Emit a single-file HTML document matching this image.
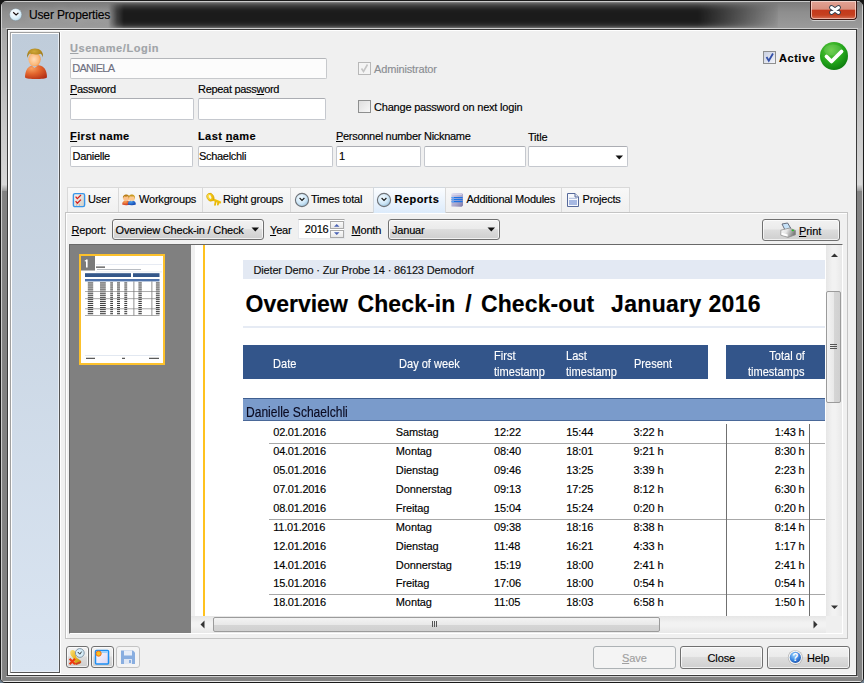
<!DOCTYPE html>
<html><head><meta charset="utf-8">
<style>
*{box-sizing:border-box;margin:0;padding:0}
html,body{width:864px;height:683px;overflow:hidden;background:linear-gradient(#151515 0,#151515 50%,#6f8090 50%)}
body{font-family:"Liberation Sans",sans-serif;font-size:11px;color:#000;position:relative}
.a{position:absolute}
.t{position:absolute;white-space:pre;line-height:1}
.inp{position:absolute;background:#fff;border:1px solid #c5c8ce;border-top-color:#abadb3;border-radius:2px}
.u{text-decoration:underline;text-underline-offset:1px}
.cb{position:absolute;width:13px;height:13px;border:1px solid #8e8f8f;background:linear-gradient(135deg,#dedede,#f8f8f8)}
.tab{position:absolute;top:187px;height:25px;border:1px solid #d9d9d9;border-bottom:none;background:linear-gradient(#f8f8f8,#f0f0f0)}
.btn{position:absolute;border:1px solid #707070;border-radius:3px;background:linear-gradient(#f2f2f2 0,#ebebeb 45%,#dddddd 50%,#cfcfcf 100%);box-shadow:inset 0 0 0 1px rgba(255,255,255,.7)}
.rt{position:absolute;white-space:pre;line-height:1;font-size:11px;color:#000;letter-spacing:-0.2px}
.hd{position:absolute;white-space:pre;line-height:1;font-size:12px;color:#fff}
.t,.rt{-webkit-text-stroke:0.15px currentColor}</style></head><body>
<!-- window frame -->
<div class="a" style="left:0;top:0;width:864px;height:683px;border-radius:7px 7px 5px 5px;background:linear-gradient(90deg,#8a8a8a,#818181 3px,#838383 861px,#8a8a8a);border:1px solid #1a1a1a;overflow:hidden">
  <div class="a" style="left:0;top:0;width:862px;height:28px;background:linear-gradient(#7a7a7a,#8e8e8e 40%,#9c9c9c)"></div>
  <div class="a" style="left:107px;top:2px;width:670px;height:25px;background:linear-gradient(#5a5a5a 0,#3a3a3a 12%,#1c1c1c 28%,#1a1a1a 72%,#2c2c2c 88%,#555 100%);-webkit-mask-image:linear-gradient(90deg,transparent 0,rgba(0,0,0,.7) 9px,#000 16px,#000 590px,rgba(0,0,0,.55) 630px,transparent 675px);filter:blur(1.5px)"></div>

  <div class="a" style="left:0;top:0;width:862px;height:1px;background:#e0e0e0;opacity:.8"></div>
  <div class="a" style="left:1px;top:27px;width:5px;height:163px;background:linear-gradient(#a6a6a6,#c4c4c4 50%,#d8d8d8 96%,#9a9a9a)"></div>
  <div class="a" style="left:856px;top:27px;width:5px;height:163px;background:linear-gradient(#a6a6a6,#c4c4c4 50%,#d8d8d8 96%,#9a9a9a)"></div>
  <div class="a" style="left:0;top:0;width:1px;height:683px;background:#e0e0e0;opacity:.8"></div>
  <div class="a" style="right:0;top:0;width:1px;height:683px;background:#e0e0e0;opacity:.8"></div>
  <div class="a" style="left:0;bottom:0;width:862px;height:1px;background:#e8e8e8"></div>
</div>
<!-- title -->
<svg class="a" style="left:9px;top:8px" width="14" height="14" viewBox="0 0 14 14"><defs><radialGradient id="tc" cx="0.4" cy="0.35" r="0.7"><stop offset="0" stop-color="#fbfdff"/><stop offset="0.6" stop-color="#e0f2fb"/><stop offset="1" stop-color="#b9dcee"/></radialGradient></defs><circle cx="6.7" cy="6.6" r="6.1" fill="url(#tc)" stroke="rgba(110,120,130,.45)" stroke-width="0.8"/><path d="M4.2 4.3 L7.1 6.9 L9.4 4.9" stroke="#1a1010" stroke-width="1.2" fill="none"/></svg>

<div class="t" style="left:29px;top:9px;font-size:12px;color:#000;letter-spacing:-0.15px;text-shadow:0 0 8px rgba(255,255,255,.5)">User Properties</div>
<!-- close button -->
<div class="a" style="left:810px;top:1px;width:47px;height:19px;border:1px solid #3c1612;border-top:none;border-radius:0 0 4px 4px;background:linear-gradient(#e2a294 0,#d8907f 45%,#c4391c 52%,#c5401f 78%,#d47058 100%);box-shadow:inset 1px 0 0 rgba(255,225,215,.7),inset -1px 0 0 rgba(255,225,215,.7),inset 0 -1px 0 rgba(255,225,215,.6),0 1px 0 rgba(255,255,255,.55)"></div>
<div class="a" style="left:810px;top:0;width:47px;height:1px;background:#1a1a1a"></div>
<div class="a" style="left:811px;top:1px;width:45px;height:1px;background:#f0d0c8"></div>
<svg class="a" style="left:824px;top:3px" width="22" height="14"><path d="M7.5 4.5 L14.5 9.5 M14.5 4.5 L7.5 9.5" stroke="#33404f" stroke-width="4.8" stroke-linecap="round"/><path d="M7.5 4.5 L14.5 9.5 M14.5 4.5 L7.5 9.5" stroke="#fff" stroke-width="3" stroke-linecap="round"/></svg>
<!-- client -->
<div class="a" style="left:7px;top:29px;width:850px;height:647px;background:#f0f0f0;border:1px solid #3a3a3a"></div>
<div class="a" style="left:8px;top:30px;width:848px;height:1px;background:#fff"></div>
<div class="a" style="left:8px;top:30px;width:1px;height:645px;background:#fff"></div>
<div class="a" style="left:8px;top:674px;width:848px;height:1px;background:#fff"></div>
<div class="a" style="left:6px;top:28px;width:852px;height:1px;background:#d0d0d0"></div>
<div class="a" style="left:6px;top:676px;width:852px;height:1px;background:#cfcfcf"></div>
<!-- left panel -->
<div class="a" style="left:10px;top:32px;width:50px;height:641px;border-top:1px solid #a0a0a0;border-left:1px solid #a0a0a0;border-right:1px solid #555;border-bottom:1px solid #555;background:linear-gradient(#bfccda,#dae5f2);box-shadow:inset 1px 1px 0 #fff,inset -1px -1px 0 #e8eef6"></div>
<div class="a" style="left:60px;top:32px;width:1px;height:642px;background:#fff"></div>
<div class="a" style="left:10px;top:673px;width:51px;height:1px;background:#fff"></div>
<!-- person icon -->
<svg class="a" style="left:22px;top:46px" width="28" height="36" viewBox="0 0 28 36">
  <defs>
    <radialGradient id="bd" cx="0.3" cy="0.25" r="0.9"><stop offset="0" stop-color="#f8a060"/><stop offset="0.45" stop-color="#e2642c"/><stop offset="1" stop-color="#b02c14"/></radialGradient>
    <radialGradient id="fc" cx="0.45" cy="0.5" r="0.6"><stop offset="0" stop-color="#ffdcb8"/><stop offset="0.7" stop-color="#fbb878"/><stop offset="1" stop-color="#f09040"/></radialGradient>
    <radialGradient id="hr" cx="0.45" cy="0.3" r="0.7"><stop offset="0" stop-color="#d0a838"/><stop offset="1" stop-color="#98700e"/></radialGradient>
  </defs>
  <path d="M3 31.5 C3 23.5 6.5 19 14 19 C21.5 19 25 23.5 25 31.5 C23 33.5 5 33.5 3 31.5Z" fill="url(#bd)"/>
  <path d="M9.5 19.5 L12.5 22 L16 19.5Z" fill="#b9c6d2"/>
  <ellipse cx="12.6" cy="13.3" rx="6.1" ry="6.9" fill="url(#fc)"/>
  <path d="M5.2 12 C4.6 5.5 8 2.6 13 2.6 C18 2.6 21.6 5.5 21 11.5 C20.4 9.5 19.6 8.4 18.6 7.8 C16 8.8 10.5 8.8 8 7.6 C6.6 8.6 5.8 10.2 5.2 12Z" fill="url(#hr)"/>
</svg>
<!-- form -->
<div class="t" style="left:70px;top:43px;font-weight:bold;color:#a0a4a8;letter-spacing:0.55px"><span class="u">U</span>sename/Login</div>
<div class="inp" style="left:70px;top:58px;width:257px;height:21px;background:#fcfcfc;border-color:#c7c9cc;border-top-color:#b4b6ba"></div>
<div class="t" style="left:72.2px;top:62.6px;color:#6d6f80;letter-spacing:-0.7px">DANIELA</div>
<div class="t" style="left:70px;top:83.5px;letter-spacing:-0.3px"><span class="u">P</span>assword</div>
<div class="t" style="left:198px;top:83.5px;letter-spacing:-0.3px">Repeat pass<span class="u">w</span>ord</div>
<div class="inp" style="left:70px;top:98px;width:124px;height:22px"></div>
<div class="inp" style="left:198px;top:98px;width:128px;height:22px"></div>
<!-- admin checkbox -->
<div class="cb" style="left:358px;top:62px;border-color:#b8b8b8;background:#f4f4f4"></div>
<svg class="a" style="left:358px;top:62px" width="13" height="13"><path d="M3.5 6.5 L5.5 9.5 L9.5 2.5" stroke="#c4c4c4" stroke-width="1.6" fill="none"/></svg>
<div class="t" style="left:374px;top:63.6px;color:#8a8d92;letter-spacing:-0.15px">Administrator</div>
<div class="cb" style="left:358px;top:100px"></div>
<div class="t" style="left:374px;top:102.4px;letter-spacing:-0.2px">Change password on next login</div>
<!-- active -->
<div class="cb" style="left:763px;top:51px;background:linear-gradient(135deg,#c9cfe0,#f2f4fa)"></div>
<svg class="a" style="left:763px;top:51px" width="13" height="13"><path d="M3.5 6 L5.8 9.8 L10 2.5" stroke="#3450a8" stroke-width="1.8" fill="none"/></svg>
<div class="t" style="left:779px;top:52.6px;font-weight:bold;letter-spacing:0.55px">Active</div>
<svg class="a" style="left:819px;top:41px" width="30" height="30" viewBox="0 0 30 30">
  <defs>
    <radialGradient id="gr" cx="0.4" cy="0.3" r="0.75"><stop offset="0" stop-color="#62cc40"/><stop offset="0.6" stop-color="#22a41a"/><stop offset="1" stop-color="#0b780e"/></radialGradient>
  </defs>
  <circle cx="15" cy="15" r="14" fill="url(#gr)"/>
  <ellipse cx="14" cy="9" rx="9" ry="5.5" fill="#fff" opacity="0.1"/>
  <path d="M7.5 15.5 L12.5 20.5 L22.5 10.5" stroke="#fff" stroke-width="3.8" fill="none" stroke-linecap="round" stroke-linejoin="round"/>
</svg>
<!-- row names -->
<div class="t" style="left:70px;top:130.7px;font-weight:bold;letter-spacing:0.4px"><span class="u">F</span>irst name</div>
<div class="t" style="left:198px;top:130.7px;font-weight:bold;letter-spacing:0.4px">Last <span class="u">n</span>ame</div>
<div class="t" style="left:336px;top:130.5px;letter-spacing:-0.3px"><span class="u">P</span>ersonnel number</div>
<div class="t" style="left:424px;top:130.5px;letter-spacing:-0.3px">Nickname</div>
<div class="t" style="left:528px;top:132px;letter-spacing:-0.2px">Title</div>
<div class="inp" style="left:70px;top:146px;width:123px;height:21px"></div>
<div class="t" style="left:72.5px;top:150.5px;letter-spacing:-0.3px">Danielle</div>
<div class="inp" style="left:198px;top:146px;width:135px;height:21px"></div>
<div class="t" style="left:199px;top:150.5px;letter-spacing:-0.3px">Schaelchli</div>
<div class="inp" style="left:336px;top:146px;width:85px;height:21px"></div>
<div class="t" style="left:339px;top:150.5px">1</div>
<div class="inp" style="left:424px;top:146px;width:102px;height:21px"></div>
<div class="inp" style="left:528px;top:146px;width:100px;height:21px"></div>
<svg class="a" style="left:615px;top:155px" width="9" height="6"><path d="M0.5 0.5 H8 L4.25 4.5Z" fill="#111"/></svg>
<!-- tab panel -->
<div class="a" style="left:65px;top:212px;width:783px;height:427px;border:1px solid #c4c4c4;background:#f0f0f0;box-shadow:inset 1px 1px 0 #fff"></div>
<div class="tab" style="left:67px;width:52px"></div>
<div class="tab" style="left:118px;width:85px"></div>
<div class="tab" style="left:202px;width:89px"></div>
<div class="tab" style="left:290px;width:84px"></div>
<div class="tab" style="left:373px;width:73px;height:26px;background:linear-gradient(#fbfdff,#dcebfb);border-color:#d2d8de"></div>
<div class="tab" style="left:445px;width:117px"></div>
<div class="tab" style="left:561px;width:69px"></div>
<!-- tab icons -->
<svg class="a" style="left:72px;top:192px" width="14" height="16" viewBox="0 0 14 16">
  <defs><linearGradient id="ub" x1="0" y1="0" x2="1" y2="1"><stop offset="0" stop-color="#f6f4f0"/><stop offset="1" stop-color="#d2cec6"/></linearGradient></defs>
  <rect x="1.4" y="1.6" width="11.2" height="13" rx="1.6" fill="url(#ub)" stroke="#3896ea" stroke-width="1.4"/>
  <path d="M3.6 4.6 L5.3 6.6 L9 3 M3.6 9.2 L5.3 11.2 L9 7.6" stroke="#d8201c" stroke-width="1.3" fill="none"/>
  <path d="M4 13 H5 M7 13 H8" stroke="#999" stroke-width="0.8"/>
</svg>
<div class="t" style="left:88px;top:193.5px;letter-spacing:-0.2px">User</div>
<svg class="a" style="left:121px;top:193px" width="16" height="14" viewBox="0 0 16 14">
  <defs>
    <radialGradient id="wr" cx="0.35" cy="0.3" r="0.8"><stop offset="0" stop-color="#f8a050"/><stop offset="1" stop-color="#c8281a"/></radialGradient>
    <radialGradient id="wb" cx="0.35" cy="0.3" r="0.8"><stop offset="0" stop-color="#4aa0f0"/><stop offset="1" stop-color="#0a3aa8"/></radialGradient>
  </defs>
  <path d="M1.2 11.6 C1 8.6 2.8 7.4 5.2 7.4 C7.6 7.4 9.4 8.6 9.2 11.6 C7 12.6 3.4 12.6 1.2 11.6Z" fill="url(#wr)"/>
  <circle cx="5.2" cy="5.2" r="3" fill="#fbc08a"/>
  <path d="M2 5.6 C1.6 2.6 3.4 1.6 5.2 1.6 C7 1.6 8.8 2.6 8.4 5.6 C8 4.2 7.4 3.4 6.6 3.2 C5.6 3.8 4.2 3.8 3.6 3.2 C2.8 3.6 2.3 4.4 2 5.6Z" fill="#b87e18"/>
  <path d="M6.8 11.6 C6.6 8.6 8.4 7.4 10.8 7.4 C13.2 7.4 15 8.6 14.8 11.6 C12.6 12.6 9 12.6 6.8 11.6Z" fill="url(#wb)"/>
  <circle cx="10.8" cy="5.2" r="3" fill="#fcc890"/>
  <path d="M7.6 6 C7.2 2.6 9 1.6 10.8 1.6 C12.6 1.6 14.4 2.6 14 6.4 C13.6 4.6 13 3.6 12.2 3.2 C11.2 3.6 9.8 3.6 9 3.2 C8.4 3.8 7.9 4.8 7.6 6Z" fill="#c89a20"/>
  <path d="M10 7.6 L10.8 8.6 L11.6 7.6Z" fill="#bfe8f8"/>
</svg>
<div class="t" style="left:139px;top:193.5px;letter-spacing:-0.2px">Workgroups</div>
<svg class="a" style="left:205px;top:192px" width="17" height="16" viewBox="0 0 17 16">
  <defs><linearGradient id="ky" x1="0" y1="0" x2="1" y2="1"><stop offset="0" stop-color="#fff27a"/><stop offset="0.5" stop-color="#f6cc14"/><stop offset="1" stop-color="#e0a800"/></linearGradient></defs>
  <path d="M7.6 7.4 L15 10.4" stroke="#f0c20e" stroke-width="2.4" stroke-linecap="round"/><path d="M10.6 9.6 L10 12.8 M13.2 10.6 L12.9 12.6" stroke="#e8b808" stroke-width="1.8" stroke-linecap="round"/>
  <ellipse cx="5.4" cy="5.2" rx="3.3" ry="4.1" transform="rotate(-28 5.4 5.2)" fill="url(#ky)" stroke="#d6a000" stroke-width="0.7"/>
  <ellipse cx="5.1" cy="5" rx="1.1" ry="2" transform="rotate(-28 5.1 5)" fill="#f7f3e8"/>
</svg>
<div class="t" style="left:223px;top:193.5px;letter-spacing:-0.2px">Right groups</div>
<svg class="a" style="left:294px;top:192px" width="16" height="16" viewBox="0 0 16 16">
  <defs><radialGradient id="ck" cx="0.4" cy="0.35" r="0.7"><stop offset="0" stop-color="#f4fbff"/><stop offset="0.6" stop-color="#cfe7f7"/><stop offset="1" stop-color="#96bfdc"/></radialGradient></defs>
  <circle cx="8" cy="8" r="6.6" fill="url(#ck)" stroke="#6f7378" stroke-width="1.1"/>
  <path d="M5.6 6 L8 8.4 L10.4 6" stroke="#1a1a1a" stroke-width="1.2" fill="none"/>
</svg>
<div class="t" style="left:311px;top:193.5px;letter-spacing:-0.2px">Times total</div>
<svg class="a" style="left:376px;top:192px" width="16" height="16" viewBox="0 0 16 16">
  <circle cx="8" cy="8" r="6.6" fill="url(#ck)" stroke="#6f7378" stroke-width="1.1"/>
  <path d="M5.6 6 L8 8.4 L10.4 6" stroke="#1a1a1a" stroke-width="1.2" fill="none"/>
</svg>
<div class="t" style="left:394.5px;top:194px;font-weight:bold;letter-spacing:0.45px">Reports</div>
<svg class="a" style="left:450px;top:192px" width="14" height="16" viewBox="0 0 14 16">
  <defs><linearGradient id="db" x1="0" y1="0" x2="1" y2="1"><stop offset="0" stop-color="#d6d4ec"/><stop offset="0.6" stop-color="#a9a6cc"/><stop offset="1" stop-color="#7c78a8"/></linearGradient></defs>
  <path d="M1.4 2 L3 0.9 L13 1.2 L13 13.6 L11.6 14.8 L1.4 14.6Z" fill="url(#db)"/>
  <path d="M1.4 2 L11.6 2.2 L13 1.2" stroke="#eeeefa" stroke-width="0.8" fill="none"/>
  <path d="M1.6 5.6 H12.6 M1.6 7.6 H12.6 M1.6 9.6 H12.6" stroke="#1c72e4" stroke-width="1.3"/>
  <path d="M1.8 5.6 H4 M1.8 7.6 H4 M1.8 9.6 H4" stroke="#5aa0f4" stroke-width="1.3"/>
</svg>
<div class="t" style="left:466.5px;top:193.5px;letter-spacing:-0.25px">Additional Modules</div>
<svg class="a" style="left:566px;top:192px" width="14" height="16" viewBox="0 0 14 16">
  <path d="M1.5 1.5 H9 L12.5 5 V14.5 H1.5Z" fill="#f6f8fc" stroke="#56699a"/>
  <path d="M9 1.5 V5 H12.5" fill="#dfe6f2" stroke="#56699a"/>
  <path d="M3 6.3 H11" stroke="#8a9cc8" stroke-width="0.7"/>
  <rect x="3" y="8" width="8" height="5" fill="#a6b8e2"/>
</svg>
<div class="t" style="left:582.5px;top:193.5px;letter-spacing:-0.2px">Projects</div>
<!-- toolbar -->
<div class="t" style="left:71.5px;top:225px;letter-spacing:-0.2px"><span class="u">R</span>eport:</div>
<div class="btn" style="left:112px;top:219px;width:152px;height:21px"></div>
<div class="t" style="left:115.5px;top:224.7px;letter-spacing:-0.18px">Overview Check-in / Check</div>
<svg class="a" style="left:251px;top:227px" width="9" height="6"><path d="M0.5 0.5 H8 L4.25 4.5Z" fill="#111"/></svg>
<div class="t" style="left:270px;top:225px;letter-spacing:-0.2px"><span class="u">Y</span>ear</div>
<div class="a" style="left:298px;top:219px;width:47px;height:20px;background:#fff;border:1px solid #e6e8ec;border-top-color:#a8a8a8"></div>
<div class="t" style="left:304.8px;top:223.8px;letter-spacing:-0.2px">2016</div>
<div class="a" style="left:330px;top:221px;width:14px;height:8px;border:1px solid #a9a9a9;background:linear-gradient(#fbfbfb,#e8e8e8)"></div>
<div class="a" style="left:330px;top:230px;width:14px;height:8px;border:1px solid #a9a9a9;background:linear-gradient(#fbfbfb,#e8e8e8)"></div>
<svg class="a" style="left:333px;top:222px" width="8" height="14"><path d="M1 4.8 L3.75 2 L6.5 4.8Z M1 10.2 L3.75 13 L6.5 10.2Z" fill="#4a62b4"/></svg>
<div class="t" style="left:351.5px;top:225px;letter-spacing:-0.2px"><span class="u">M</span>onth</div>
<div class="btn" style="left:388px;top:219px;width:112px;height:21px"></div>
<div class="t" style="left:392px;top:225px;letter-spacing:-0.2px">Januar</div>
<svg class="a" style="left:487px;top:227px" width="9" height="6"><path d="M0.5 0.5 H8 L4.25 4.5Z" fill="#111"/></svg>
<div class="btn" style="left:762px;top:219px;width:78px;height:22px"></div>
<svg class="a" style="left:780px;top:222px" width="17" height="16" viewBox="0 0 17 16">
  <defs><linearGradient id="pb" x1="0" y1="0" x2="1" y2="0.3"><stop offset="0" stop-color="#fafafa"/><stop offset="0.45" stop-color="#e6e6e6"/><stop offset="1" stop-color="#7c7c7c"/></linearGradient></defs>
  <path d="M2 2 L7.6 1 L10.6 6 L5 8Z" fill="#c6e2f8" stroke="#5a6070" stroke-width="0.9" stroke-linejoin="round"/>
  <path d="M0.8 8.2 L9.5 6 L15.5 8.6 L15.5 12.8 L8 15.4 L0.8 13.2Z" fill="url(#pb)" stroke="#8a8a8a" stroke-width="0.7" stroke-linejoin="round"/>
  <path d="M1.6 10.8 L7.6 12.6 L7.6 14.6 L1.6 12.8Z" fill="#fff"/>
  <ellipse cx="12.8" cy="8.4" rx="1.2" ry="0.8" fill="#22c022"/>
</svg>
<div class="t" style="left:799px;top:225.8px;letter-spacing:-0.1px"><span class="u">P</span>rint</div>
<!-- preview frame -->
<div class="a" style="left:69px;top:244px;width:774px;height:390px;border-top:1px solid #696969;border-left:1px solid #696969;border-right:1px solid #fff;border-bottom:1px solid #fff;background:#808080"></div>
<!-- page area -->
<div class="a" style="left:191px;top:245px;width:635px;height:371px;background:#fff;overflow:hidden">
  <div class="a" style="left:0;top:0;width:4px;height:371px;background:#f0f0f0"></div>
  <div class="a" style="left:12px;top:0;width:2px;height:371px;background:#ffc21f"></div>
</div>
<!-- v scrollbar -->
<div class="a" style="left:826px;top:245px;width:16px;height:371px;background:linear-gradient(90deg,#e6e6e6,#f2f2f2 40%,#f2f2f2 60%,#e8e8e8)"></div>
<svg class="a" style="left:830px;top:253px" width="9" height="6"><path d="M1 4 L4.5 0.5 L8 4Z" fill="#333"/></svg>
<svg class="a" style="left:830px;top:605px" width="9" height="6"><path d="M1 0.5 L4.5 4 L8 0.5Z" fill="#333"/></svg>
<div class="a" style="left:826px;top:291px;width:15px;height:112px;border:1px solid #9b9b9b;border-radius:2px;background:linear-gradient(90deg,#f3f3f3,#e9e9e9 50%,#d6d6d6 51%,#d0d0d0)"></div>
<div class="a" style="left:830px;top:344px;width:7px;height:1px;background:#555"></div>
<div class="a" style="left:830px;top:346px;width:7px;height:1px;background:#555"></div>
<div class="a" style="left:830px;top:348px;width:7px;height:1px;background:#555"></div>
<!-- h scrollbar -->
<div class="a" style="left:191px;top:616px;width:635px;height:17px;background:linear-gradient(#e6e6e6,#f2f2f2 40%,#f2f2f2 60%,#e8e8e8)"></div>
<svg class="a" style="left:200px;top:620px" width="6" height="9"><path d="M4.5 0.5 L0.5 4.5 L4.5 8.5Z" fill="#333"/></svg>
<svg class="a" style="left:813px;top:620px" width="6" height="9"><path d="M0.5 0.5 L4.5 4.5 L0.5 8.5Z" fill="#333"/></svg>
<div class="a" style="left:213px;top:617px;width:447px;height:15px;border:1px solid #9b9b9b;border-radius:2px;background:linear-gradient(#f3f3f3,#e9e9e9 50%,#d6d6d6 51%,#d0d0d0)"></div>
<div class="a" style="left:432px;top:621px;width:1px;height:6px;background:#555"></div>
<div class="a" style="left:434px;top:621px;width:1px;height:6px;background:#555"></div>
<div class="a" style="left:436px;top:621px;width:1px;height:6px;background:#555"></div>
<div class="a" style="left:826px;top:616px;width:16px;height:17px;background:#efefef"></div>
<!-- thumbnail -->
<div class="a" style="left:79px;top:254px;width:86px;height:111px;border:2px solid #fcc12c;background:#fff"></div>
<svg class="a" style="left:81px;top:256px" width="82" height="107" viewBox="0 0 82 107"><rect x="0" y="0" width="14" height="14.5" fill="#7b7b7b"/><rect x="5" y="3.5" width="1.6" height="8" fill="#fff"/><rect x="3.8" y="4.2" width="1.5" height="1.2" fill="#fff"/><rect x="15" y="8" width="66" height="0.8" fill="#e1e7f0"/><rect x="15" y="10.6" width="9" height="1" fill="#222"/><rect x="16" y="13" width="44" height="1" fill="#9aa0a8" opacity="0.7"/><rect x="15" y="15.5" width="66" height="0.8" fill="#e1e7f0"/><rect x="4" y="17.2" width="46" height="3.8" fill="#34578a"/><rect x="52" y="17.2" width="26.5" height="3.8" fill="#34578a"/><rect x="4" y="23" width="74.5" height="2.4" fill="#4f73ab"/><rect x="6.8" y="26.40" width="5.4" height="1.1" fill="#000" opacity="0.75"/><rect x="19" y="26.40" width="5.8" height="1.1" fill="#000" opacity="0.75"/><rect x="29.2" y="26.40" width="2.8" height="1.1" fill="#000" opacity="0.75"/><rect x="36" y="26.40" width="3" height="1.1" fill="#000" opacity="0.75"/><rect x="43.3" y="26.40" width="2.9" height="1.1" fill="#000" opacity="0.75"/><rect x="57.4" y="26.40" width="3.4" height="1.1" fill="#000" opacity="0.75"/><rect x="74.9" y="26.40" width="3.8" height="1.1" fill="#000" opacity="0.75"/><rect x="6.8" y="28.45" width="5.4" height="1.1" fill="#000" opacity="0.75"/><rect x="19" y="28.45" width="5.8" height="1.1" fill="#000" opacity="0.75"/><rect x="29.2" y="28.45" width="2.8" height="1.1" fill="#000" opacity="0.75"/><rect x="36" y="28.45" width="3" height="1.1" fill="#000" opacity="0.75"/><rect x="43.3" y="28.45" width="2.9" height="1.1" fill="#000" opacity="0.75"/><rect x="57.4" y="28.45" width="3.4" height="1.1" fill="#000" opacity="0.75"/><rect x="74.9" y="28.45" width="3.8" height="1.1" fill="#000" opacity="0.75"/><rect x="6.8" y="30.50" width="5.4" height="1.1" fill="#000" opacity="0.75"/><rect x="19" y="30.50" width="5.8" height="1.1" fill="#000" opacity="0.75"/><rect x="29.2" y="30.50" width="2.8" height="1.1" fill="#000" opacity="0.75"/><rect x="36" y="30.50" width="3" height="1.1" fill="#000" opacity="0.75"/><rect x="43.3" y="30.50" width="2.9" height="1.1" fill="#000" opacity="0.75"/><rect x="57.4" y="30.50" width="3.4" height="1.1" fill="#000" opacity="0.75"/><rect x="74.9" y="30.50" width="3.8" height="1.1" fill="#000" opacity="0.75"/><rect x="6.8" y="32.55" width="5.4" height="1.1" fill="#000" opacity="0.75"/><rect x="19" y="32.55" width="5.8" height="1.1" fill="#000" opacity="0.75"/><rect x="29.2" y="32.55" width="2.8" height="1.1" fill="#000" opacity="0.75"/><rect x="36" y="32.55" width="3" height="1.1" fill="#000" opacity="0.75"/><rect x="43.3" y="32.55" width="2.9" height="1.1" fill="#000" opacity="0.75"/><rect x="57.4" y="32.55" width="3.4" height="1.1" fill="#000" opacity="0.75"/><rect x="74.9" y="32.55" width="3.8" height="1.1" fill="#000" opacity="0.75"/><rect x="6.8" y="34.60" width="5.4" height="1.1" fill="#000" opacity="0.75"/><rect x="19" y="34.60" width="5.8" height="1.1" fill="#000" opacity="0.75"/><rect x="29.2" y="34.60" width="2.8" height="1.1" fill="#000" opacity="0.75"/><rect x="36" y="34.60" width="3" height="1.1" fill="#000" opacity="0.75"/><rect x="43.3" y="34.60" width="2.9" height="1.1" fill="#000" opacity="0.75"/><rect x="57.4" y="34.60" width="3.4" height="1.1" fill="#000" opacity="0.75"/><rect x="74.9" y="34.60" width="3.8" height="1.1" fill="#000" opacity="0.75"/><rect x="6.8" y="36.65" width="5.4" height="1.1" fill="#000" opacity="0.75"/><rect x="19" y="36.65" width="5.8" height="1.1" fill="#000" opacity="0.75"/><rect x="29.2" y="36.65" width="2.8" height="1.1" fill="#000" opacity="0.75"/><rect x="36" y="36.65" width="3" height="1.1" fill="#000" opacity="0.75"/><rect x="43.3" y="36.65" width="2.9" height="1.1" fill="#000" opacity="0.75"/><rect x="57.4" y="36.65" width="3.4" height="1.1" fill="#000" opacity="0.75"/><rect x="74.9" y="36.65" width="3.8" height="1.1" fill="#000" opacity="0.75"/><rect x="6.8" y="38.70" width="5.4" height="1.1" fill="#000" opacity="0.75"/><rect x="19" y="38.70" width="5.8" height="1.1" fill="#000" opacity="0.75"/><rect x="29.2" y="38.70" width="2.8" height="1.1" fill="#000" opacity="0.75"/><rect x="36" y="38.70" width="3" height="1.1" fill="#000" opacity="0.75"/><rect x="43.3" y="38.70" width="2.9" height="1.1" fill="#000" opacity="0.75"/><rect x="57.4" y="38.70" width="3.4" height="1.1" fill="#000" opacity="0.75"/><rect x="74.9" y="38.70" width="3.8" height="1.1" fill="#000" opacity="0.75"/><rect x="6.8" y="40.75" width="5.4" height="1.1" fill="#000" opacity="0.75"/><rect x="19" y="40.75" width="5.8" height="1.1" fill="#000" opacity="0.75"/><rect x="29.2" y="40.75" width="2.8" height="1.1" fill="#000" opacity="0.75"/><rect x="36" y="40.75" width="3" height="1.1" fill="#000" opacity="0.75"/><rect x="43.3" y="40.75" width="2.9" height="1.1" fill="#000" opacity="0.75"/><rect x="57.4" y="40.75" width="3.4" height="1.1" fill="#000" opacity="0.75"/><rect x="74.9" y="40.75" width="3.8" height="1.1" fill="#000" opacity="0.75"/><rect x="6.8" y="42.80" width="5.4" height="1.1" fill="#000" opacity="0.75"/><rect x="19" y="42.80" width="5.8" height="1.1" fill="#000" opacity="0.75"/><rect x="29.2" y="42.80" width="2.8" height="1.1" fill="#000" opacity="0.75"/><rect x="36" y="42.80" width="3" height="1.1" fill="#000" opacity="0.75"/><rect x="43.3" y="42.80" width="2.9" height="1.1" fill="#000" opacity="0.75"/><rect x="57.4" y="42.80" width="3.4" height="1.1" fill="#000" opacity="0.75"/><rect x="74.9" y="42.80" width="3.8" height="1.1" fill="#000" opacity="0.75"/><rect x="6.8" y="44.85" width="5.4" height="1.1" fill="#000" opacity="0.75"/><rect x="19" y="44.85" width="5.8" height="1.1" fill="#000" opacity="0.75"/><rect x="29.2" y="44.85" width="2.8" height="1.1" fill="#000" opacity="0.75"/><rect x="36" y="44.85" width="3" height="1.1" fill="#000" opacity="0.75"/><rect x="43.3" y="44.85" width="2.9" height="1.1" fill="#000" opacity="0.75"/><rect x="57.4" y="44.85" width="3.4" height="1.1" fill="#000" opacity="0.75"/><rect x="74.9" y="44.85" width="3.8" height="1.1" fill="#000" opacity="0.75"/><rect x="6.8" y="46.90" width="5.4" height="1.1" fill="#000" opacity="0.75"/><rect x="19" y="46.90" width="5.8" height="1.1" fill="#000" opacity="0.75"/><rect x="29.2" y="46.90" width="2.8" height="1.1" fill="#000" opacity="0.75"/><rect x="36" y="46.90" width="3" height="1.1" fill="#000" opacity="0.75"/><rect x="43.3" y="46.90" width="2.9" height="1.1" fill="#000" opacity="0.75"/><rect x="57.4" y="46.90" width="3.4" height="1.1" fill="#000" opacity="0.75"/><rect x="74.9" y="46.90" width="3.8" height="1.1" fill="#000" opacity="0.75"/><rect x="6.8" y="48.95" width="5.4" height="1.1" fill="#000" opacity="0.75"/><rect x="19" y="48.95" width="5.8" height="1.1" fill="#000" opacity="0.75"/><rect x="29.2" y="48.95" width="2.8" height="1.1" fill="#000" opacity="0.75"/><rect x="36" y="48.95" width="3" height="1.1" fill="#000" opacity="0.75"/><rect x="43.3" y="48.95" width="2.9" height="1.1" fill="#000" opacity="0.75"/><rect x="57.4" y="48.95" width="3.4" height="1.1" fill="#000" opacity="0.75"/><rect x="74.9" y="48.95" width="3.8" height="1.1" fill="#000" opacity="0.75"/><rect x="6.8" y="51.00" width="5.4" height="1.1" fill="#000" opacity="0.75"/><rect x="19" y="51.00" width="5.8" height="1.1" fill="#000" opacity="0.75"/><rect x="29.2" y="51.00" width="2.8" height="1.1" fill="#000" opacity="0.75"/><rect x="36" y="51.00" width="3" height="1.1" fill="#000" opacity="0.75"/><rect x="43.3" y="51.00" width="2.9" height="1.1" fill="#000" opacity="0.75"/><rect x="57.4" y="51.00" width="3.4" height="1.1" fill="#000" opacity="0.75"/><rect x="74.9" y="51.00" width="3.8" height="1.1" fill="#000" opacity="0.75"/><rect x="6.8" y="53.05" width="5.4" height="1.1" fill="#000" opacity="0.75"/><rect x="19" y="53.05" width="5.8" height="1.1" fill="#000" opacity="0.75"/><rect x="29.2" y="53.05" width="2.8" height="1.1" fill="#000" opacity="0.75"/><rect x="36" y="53.05" width="3" height="1.1" fill="#000" opacity="0.75"/><rect x="43.3" y="53.05" width="2.9" height="1.1" fill="#000" opacity="0.75"/><rect x="57.4" y="53.05" width="3.4" height="1.1" fill="#000" opacity="0.75"/><rect x="74.9" y="53.05" width="3.8" height="1.1" fill="#000" opacity="0.75"/><rect x="6.8" y="55.10" width="5.4" height="1.1" fill="#000" opacity="0.75"/><rect x="19" y="55.10" width="5.8" height="1.1" fill="#000" opacity="0.75"/><rect x="29.2" y="55.10" width="2.8" height="1.1" fill="#000" opacity="0.75"/><rect x="36" y="55.10" width="3" height="1.1" fill="#000" opacity="0.75"/><rect x="43.3" y="55.10" width="2.9" height="1.1" fill="#000" opacity="0.75"/><rect x="57.4" y="55.10" width="3.4" height="1.1" fill="#000" opacity="0.75"/><rect x="74.9" y="55.10" width="3.8" height="1.1" fill="#000" opacity="0.75"/><rect x="6.8" y="57.15" width="5.4" height="1.1" fill="#000" opacity="0.75"/><rect x="19" y="57.15" width="5.8" height="1.1" fill="#000" opacity="0.75"/><rect x="29.2" y="57.15" width="2.8" height="1.1" fill="#000" opacity="0.75"/><rect x="36" y="57.15" width="3" height="1.1" fill="#000" opacity="0.75"/><rect x="43.3" y="57.15" width="2.9" height="1.1" fill="#000" opacity="0.75"/><rect x="57.4" y="57.15" width="3.4" height="1.1" fill="#000" opacity="0.75"/><rect x="74.9" y="57.15" width="3.8" height="1.1" fill="#000" opacity="0.75"/><rect x="4" y="35.2" width="74.5" height="0.7" fill="#888"/><rect x="4" y="42.4" width="74.5" height="0.7" fill="#888"/><rect x="4" y="52.5" width="74.5" height="0.7" fill="#888"/><rect x="4" y="59.3" width="74.5" height="0.7" fill="#888"/><rect x="52.5" y="25.4" width="0.8" height="34" fill="#777"/><rect x="70.5" y="25.4" width="0.8" height="34" fill="#777"/><rect x="4" y="99" width="74.5" height="0.8" fill="#dbe3ee"/><rect x="5" y="101.8" width="9" height="1" fill="#333"/><rect x="41" y="101.8" width="3" height="1" fill="#333"/><rect x="68" y="101.8" width="10" height="1" fill="#333"/></svg>
<!-- report -->
<div class="a" style="left:0;top:245px;width:825px;height:371px;overflow:hidden">
<div class="a" style="left:243px;top:15px;width:583px;height:19px;background:#e3e9f3"></div>
<div class="t" style="left:253.5px;top:20.2px;font-size:11px;letter-spacing:-0.17px;color:#111">Dieter Demo · Zur Probe 14 · 86123 Demodorf</div>
<div class="t" style="left:245.5px;top:47.9px;font-size:23px;font-weight:bold;letter-spacing:0px">Overview</div>
<div class="t" style="left:357.5px;top:47.9px;font-size:23px;font-weight:bold;letter-spacing:0.1px">Check-in</div>
<div class="t" style="left:465.3px;top:47.9px;font-size:23px;font-weight:bold;letter-spacing:0px">/</div>
<div class="t" style="left:481px;top:47.9px;font-size:23px;font-weight:bold;letter-spacing:0.1px">Check-out</div>
<div class="t" style="left:611px;top:47.9px;font-size:23px;font-weight:bold;letter-spacing:0.35px">January 2016</div>
<div class="a" style="left:243px;top:81px;width:583px;height:2px;background:#e6ebf4"></div>
<div class="a" style="left:243px;top:100px;width:465px;height:34px;background:#33558a"></div>
<div class="a" style="left:726px;top:100px;width:100px;height:34px;background:#33558a"></div>
<div class="t" style="left:273px;top:112.0px;font-size:13px;color:#fff;transform:scaleX(0.85);transform-origin:left">Date</div>
<div class="t" style="left:398.7px;top:112.0px;font-size:13px;color:#fff;transform:scaleX(0.85);transform-origin:left">Day of week</div>
<div class="t" style="left:494px;top:104.0px;font-size:13px;color:#fff;transform:scaleX(0.85);transform-origin:left">First</div>
<div class="t" style="left:494px;top:119.5px;font-size:13px;color:#fff;transform:scaleX(0.85);transform-origin:left">timestamp</div>
<div class="t" style="left:566px;top:104.0px;font-size:13px;color:#fff;transform:scaleX(0.85);transform-origin:left">Last</div>
<div class="t" style="left:566px;top:119.5px;font-size:13px;color:#fff;transform:scaleX(0.85);transform-origin:left">timestamp</div>
<div class="t" style="left:633.7px;top:112.0px;font-size:13px;color:#fff;transform:scaleX(0.85);transform-origin:left">Present</div>
<div class="t" style="right:20.5px;top:104.0px;font-size:13px;color:#fff;transform:scaleX(0.85);transform-origin:right">Total of</div>
<div class="t" style="right:20.5px;top:119.5px;font-size:13px;color:#fff;transform:scaleX(0.85);transform-origin:right">timestamps</div>
<div class="a" style="left:243px;top:153px;width:583px;height:23px;background:#7a9bcb;border-top:1px solid #3f5f90;border-bottom:1px solid #4a6898"></div>
<div class="t" style="left:246.3px;top:159.6px;font-size:14px;color:#0a0a20;transform:scaleX(0.86);transform-origin:left">Danielle Schaelchli</div>
<div class="a" style="left:269px;top:198px;width:557px;height:1px;background:#a8a8a8"></div>
<div class="a" style="left:269px;top:274px;width:557px;height:1px;background:#a8a8a8"></div>
<div class="a" style="left:269px;top:349px;width:557px;height:1px;background:#a8a8a8"></div>
<div class="a" style="left:726px;top:179px;width:1px;height:200px;background:#707070"></div>
<div class="a" style="left:809px;top:179px;width:1px;height:200px;background:#707070"></div>
<div class="rt" style="left:273.3px;top:181.7px;letter-spacing:-0.25px">02.01.2016</div>
<div class="rt" style="left:395.8px;top:181.7px;letter-spacing:-0.1px">Samstag</div>
<div class="rt" style="left:494px;top:181.7px;letter-spacing:-0.1px">12:22</div>
<div class="rt" style="left:566.3px;top:181.7px;letter-spacing:-0.1px">15:44</div>
<div class="rt" style="left:633.5px;top:181.7px;letter-spacing:-0.1px">3:22 h</div>
<div class="rt" style="right:20.5px;top:181.7px;letter-spacing:-0.15px">1:43 h</div>
<div class="rt" style="left:273.3px;top:200.7px;letter-spacing:-0.25px">04.01.2016</div>
<div class="rt" style="left:395.8px;top:200.7px;letter-spacing:-0.1px">Montag</div>
<div class="rt" style="left:494px;top:200.7px;letter-spacing:-0.1px">08:40</div>
<div class="rt" style="left:566.3px;top:200.7px;letter-spacing:-0.1px">18:01</div>
<div class="rt" style="left:633.5px;top:200.7px;letter-spacing:-0.1px">9:21 h</div>
<div class="rt" style="right:20.5px;top:200.7px;letter-spacing:-0.15px">8:30 h</div>
<div class="rt" style="left:273.3px;top:219.7px;letter-spacing:-0.25px">05.01.2016</div>
<div class="rt" style="left:395.8px;top:219.7px;letter-spacing:-0.1px">Dienstag</div>
<div class="rt" style="left:494px;top:219.7px;letter-spacing:-0.1px">09:46</div>
<div class="rt" style="left:566.3px;top:219.7px;letter-spacing:-0.1px">13:25</div>
<div class="rt" style="left:633.5px;top:219.7px;letter-spacing:-0.1px">3:39 h</div>
<div class="rt" style="right:20.5px;top:219.7px;letter-spacing:-0.15px">2:23 h</div>
<div class="rt" style="left:273.3px;top:238.7px;letter-spacing:-0.25px">07.01.2016</div>
<div class="rt" style="left:395.8px;top:238.7px;letter-spacing:-0.1px">Donnerstag</div>
<div class="rt" style="left:494px;top:238.7px;letter-spacing:-0.1px">09:13</div>
<div class="rt" style="left:566.3px;top:238.7px;letter-spacing:-0.1px">17:25</div>
<div class="rt" style="left:633.5px;top:238.7px;letter-spacing:-0.1px">8:12 h</div>
<div class="rt" style="right:20.5px;top:238.7px;letter-spacing:-0.15px">6:30 h</div>
<div class="rt" style="left:273.3px;top:257.7px;letter-spacing:-0.25px">08.01.2016</div>
<div class="rt" style="left:395.8px;top:257.7px;letter-spacing:-0.1px">Freitag</div>
<div class="rt" style="left:494px;top:257.7px;letter-spacing:-0.1px">15:04</div>
<div class="rt" style="left:566.3px;top:257.7px;letter-spacing:-0.1px">15:24</div>
<div class="rt" style="left:633.5px;top:257.7px;letter-spacing:-0.1px">0:20 h</div>
<div class="rt" style="right:20.5px;top:257.7px;letter-spacing:-0.15px">0:20 h</div>
<div class="rt" style="left:273.3px;top:276.7px;letter-spacing:-0.25px">11.01.2016</div>
<div class="rt" style="left:395.8px;top:276.7px;letter-spacing:-0.1px">Montag</div>
<div class="rt" style="left:494px;top:276.7px;letter-spacing:-0.1px">09:38</div>
<div class="rt" style="left:566.3px;top:276.7px;letter-spacing:-0.1px">18:16</div>
<div class="rt" style="left:633.5px;top:276.7px;letter-spacing:-0.1px">8:38 h</div>
<div class="rt" style="right:20.5px;top:276.7px;letter-spacing:-0.15px">8:14 h</div>
<div class="rt" style="left:273.3px;top:295.7px;letter-spacing:-0.25px">12.01.2016</div>
<div class="rt" style="left:395.8px;top:295.7px;letter-spacing:-0.1px">Dienstag</div>
<div class="rt" style="left:494px;top:295.7px;letter-spacing:-0.1px">11:48</div>
<div class="rt" style="left:566.3px;top:295.7px;letter-spacing:-0.1px">16:21</div>
<div class="rt" style="left:633.5px;top:295.7px;letter-spacing:-0.1px">4:33 h</div>
<div class="rt" style="right:20.5px;top:295.7px;letter-spacing:-0.15px">1:17 h</div>
<div class="rt" style="left:273.3px;top:314.7px;letter-spacing:-0.25px">14.01.2016</div>
<div class="rt" style="left:395.8px;top:314.7px;letter-spacing:-0.1px">Donnerstag</div>
<div class="rt" style="left:494px;top:314.7px;letter-spacing:-0.1px">15:19</div>
<div class="rt" style="left:566.3px;top:314.7px;letter-spacing:-0.1px">18:00</div>
<div class="rt" style="left:633.5px;top:314.7px;letter-spacing:-0.1px">2:41 h</div>
<div class="rt" style="right:20.5px;top:314.7px;letter-spacing:-0.15px">2:41 h</div>
<div class="rt" style="left:273.3px;top:332.7px;letter-spacing:-0.25px">15.01.2016</div>
<div class="rt" style="left:395.8px;top:332.7px;letter-spacing:-0.1px">Freitag</div>
<div class="rt" style="left:494px;top:332.7px;letter-spacing:-0.1px">17:06</div>
<div class="rt" style="left:566.3px;top:332.7px;letter-spacing:-0.1px">18:00</div>
<div class="rt" style="left:633.5px;top:332.7px;letter-spacing:-0.1px">0:54 h</div>
<div class="rt" style="right:20.5px;top:332.7px;letter-spacing:-0.15px">0:54 h</div>
<div class="rt" style="left:273.3px;top:351.7px;letter-spacing:-0.25px">18.01.2016</div>
<div class="rt" style="left:395.8px;top:351.7px;letter-spacing:-0.1px">Montag</div>
<div class="rt" style="left:494px;top:351.7px;letter-spacing:-0.1px">11:05</div>
<div class="rt" style="left:566.3px;top:351.7px;letter-spacing:-0.1px">18:03</div>
<div class="rt" style="left:633.5px;top:351.7px;letter-spacing:-0.1px">6:58 h</div>
<div class="rt" style="right:20.5px;top:351.7px;letter-spacing:-0.15px">1:50 h</div>
</div>
<!-- bottom toolbar -->
<div class="btn" style="left:66px;top:646px;width:23px;height:22px"></div>
<svg class="a" style="left:67px;top:647px" width="22" height="20" viewBox="0 0 22 20">
  <defs><linearGradient id="st" x1="0" y1="0" x2="1" y2="1"><stop offset="0" stop-color="#fbe27a"/><stop offset="0.5" stop-color="#e9b41e"/><stop offset="1" stop-color="#b88a10"/></linearGradient></defs>
  <path d="M3.2 5.5 C3.2 3.3 5 2.6 6.6 3.2 C8.4 3.9 9 5.6 8.6 7.4 L9.6 10.8 L13.6 13.6 C14.8 14.6 14.2 16.4 12.6 17 L10.5 17.6 C9.2 18 8 17.4 7.6 16.2 L6.8 12 L4.6 9.2 C3.6 8.2 3.2 7 3.2 5.5Z" fill="url(#st)"/>
  <path d="M8 16.6 L13.6 14.2 L14.2 15.6 L9 18Z" fill="#d03a2a"/>
  <circle cx="12.8" cy="6" r="4.4" fill="#d6eefa" stroke="#7a8ea0" stroke-width="0.9"/>
  <path d="M10.8 5 L12.8 7.2 L14.6 4.6" stroke="#222" stroke-width="0.9" fill="none"/>
  <path d="M2.6 11.8 L8 17.2 M8 11.8 L2.6 17.2" stroke="#ee3a10" stroke-width="2.2"/>
</svg>
<div class="btn" style="left:91px;top:646px;width:23px;height:22px"></div>
<svg class="a" style="left:94px;top:649px" width="17" height="16" viewBox="0 0 17 16">
  <defs><linearGradient id="wn" x1="0" y1="0" x2="1" y2="1"><stop offset="0" stop-color="#fbfbff"/><stop offset="1" stop-color="#dcd6f4"/></linearGradient></defs>
  <rect x="1.5" y="1.5" width="13" height="13.5" rx="1" fill="url(#wn)" stroke="#1c8ef2" stroke-width="1.5"/>
  <rect x="2.2" y="2.2" width="11.6" height="1.8" fill="#9fd2fa"/>
  <circle cx="4.6" cy="4.6" r="2.6" fill="#f7c020" stroke="#f06a20" stroke-width="1"/>
</svg>
<div class="a" style="left:116px;top:646px;width:24px;height:22px;border:1px solid #c3c3c3;border-radius:3px;background:#f4f4f4"></div>
<svg class="a" style="left:120px;top:649px" width="16" height="16" viewBox="0 0 16 16">
  <path d="M1 1.5 H13 L15 3.5 V15 H1Z" fill="#89aee0"/>
  <rect x="4" y="1.5" width="8" height="5" fill="#e8eef8"/>
  <rect x="4" y="10" width="8" height="5" fill="#dfe7f4"/>
  <rect x="9" y="11" width="2" height="3" fill="#89aee0"/>
</svg>
<div class="a" style="left:593px;top:646px;width:83px;height:23px;border:1px solid #adb2b5;border-radius:3px;background:#f4f4f4"></div>
<div class="t" style="left:622px;top:653px;color:#a0a0a0;letter-spacing:-0.1px"><span class="u">S</span>ave</div>
<div class="btn" style="left:680px;top:646px;width:83px;height:23px"></div>
<div class="t" style="left:707.5px;top:653px;letter-spacing:-0.1px">Close</div>
<div class="btn" style="left:767px;top:646px;width:83px;height:23px"></div>
<svg class="a" style="left:787px;top:649px" width="17" height="17" viewBox="0 0 17 17">
  <defs><radialGradient id="hp" cx="0.4" cy="0.3" r="0.75"><stop offset="0" stop-color="#9fd0ff"/><stop offset="0.6" stop-color="#3a86e0"/><stop offset="1" stop-color="#1b4fa8"/></radialGradient></defs>
  <circle cx="8.3" cy="8.6" r="7.4" fill="#8c8c8c" opacity="0.55"/>
  <circle cx="8.3" cy="8.4" r="6.7" fill="#f4f4f4"/>
  <circle cx="8.3" cy="8.4" r="5.6" fill="url(#hp)"/>
  <text x="8.3" y="12.3" text-anchor="middle" font-family="Liberation Sans" font-weight="bold" font-size="10" fill="#fff">?</text>
</svg>
<div class="t" style="left:807px;top:653px;letter-spacing:-0.1px">Help</div>
</body></html>
